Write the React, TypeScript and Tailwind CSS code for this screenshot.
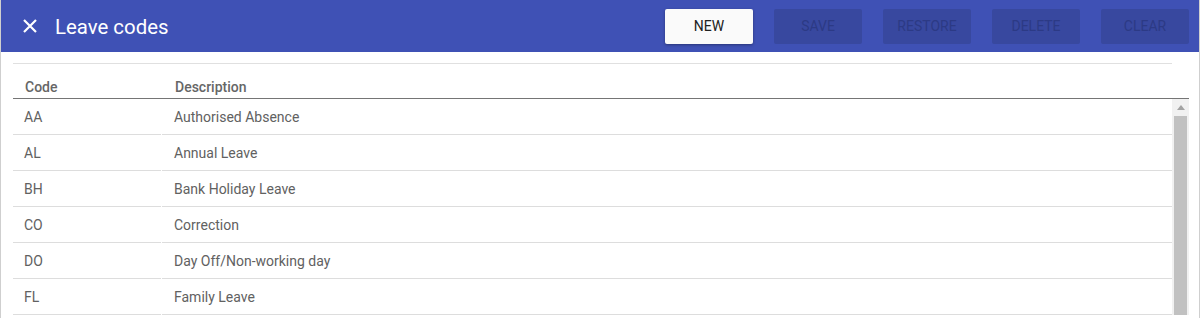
const rows = [
  { code: "AA", description: "Authorised Absence" },
  { code: "AL", description: "Annual Leave" },
  { code: "BH", description: "Bank Holiday Leave" },
  { code: "CO", description: "Correction" },
  { code: "DO", description: "Day Off/Non-working day" },
  { code: "FL", description: "Family Leave" },
];

const actions = ["SAVE", "RESTORE", "DELETE", "CLEAR"];

function CloseIcon() {
  return (
    <svg width="16" height="16" viewBox="0 0 16 16" className="text-white">
      <path d="M2 2L14 14M14 2L2 14" stroke="currentColor" strokeWidth="2.2" />
    </svg>
  );
}

export default function App() {
  return (
    <div
      className="w-[1200px] h-[318px] overflow-hidden border-x border-[#cfcfcf] bg-white"
      style={{ fontFamily: "Roboto, 'Liberation Sans', sans-serif" }}
    >
      <header className="h-[52px] bg-[#3f51b5] flex items-center pl-[21px] pr-[10px]">
        <CloseIcon />
        <h1 className="ml-[17px] mt-[2px] text-[20.4px] text-white leading-none">Leave codes</h1>
        <div className="ml-auto flex gap-[21px]">
          <button
            type="button"
            className="w-[88px] h-[35px] rounded-[2px] bg-[#fafafa] text-[14px] text-[#212121] shadow-[0_1px_3px_rgba(0,0,0,0.35)]"
          >
            NEW
          </button>
          {actions.map((label) => (
            <button
              key={label}
              type="button"
              disabled
              className="w-[88px] h-[35px] rounded-[2px] bg-[#38489f] text-[14px] text-[#2c3a85]"
            >
              {label}
            </button>
          ))}
        </div>
      </header>

      <div className="pl-[12px] pr-[10px]">
        <div className="mt-[11px] h-px bg-[#e0e0e0] mr-[17px]" />
        <div className="flex h-[35px] items-center border-b border-[#757575] text-[14px] font-medium text-[#666666]">
          <div className="w-[149px] pl-[12px] pt-[12px]">Code</div>
          <div className="pl-[13px] pt-[12px]">Description</div>
        </div>
        <div className="flex">
          <div className="flex-1">
            {rows.map((row) => (
              <div key={row.code} className="flex h-[36px] text-[14px] text-[#616161]">
                <div className="w-[148px] mr-px border-b border-[#dddddd] pl-[11px] pt-[2px] flex items-center">
                  {row.code}
                </div>
                <div className="flex-1 border-b border-[#dddddd] pl-[12px] pt-[2px] flex items-center">
                  {row.description}
                </div>
              </div>
            ))}
          </div>
          <div className="w-[17px] bg-[#f1f1f1] flex flex-col items-center">
            <div className="h-[17px] flex items-center justify-center">
              <svg width="8" height="5" viewBox="0 0 8 5">
                <path d="M4 0L8 5H0Z" fill="#a3a3a3" />
              </svg>
            </div>
            <div className="w-[13px] flex-1 bg-[#c1c1c1]" />
          </div>
        </div>
      </div>
    </div>
  );
}
